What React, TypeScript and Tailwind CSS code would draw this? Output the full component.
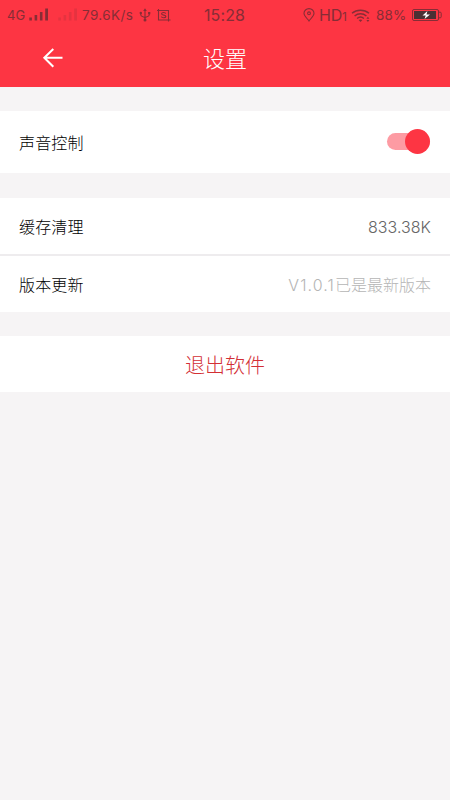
import React from 'react';

function SignalBars({ className }: { className: string }) {
  return (
    <svg className={className} width="20" height="13" viewBox="0 0 20 13" fill="currentColor">
      <rect x="0.3" y="9.5" width="2.6" height="3" />
      <rect x="5.6" y="7" width="2.6" height="5.5" />
      <rect x="10.9" y="4" width="2.6" height="8.5" />
      <rect x="16.2" y="0.5" width="2.8" height="12" />
    </svg>
  );
}

function UsbIcon() {
  return (
    <svg className="ml-[4px] shrink-0" width="12" height="14" viewBox="0 0 12 14" fill="none" stroke="currentColor" strokeWidth="1.1">
      <path d="M6 2v10M1.8 5v2c0 2.2 4.2 1.4 4.2 3.2M10.2 5v2c0 2.2-4.2 1.4-4.2 3.2" />
      <path d="M6 0.2 4.2 3h3.6z" fill="currentColor" stroke="none" />
      <circle cx="1.8" cy="5" r="1.2" fill="currentColor" stroke="none" />
      <rect x="9.1" y="4" width="2.2" height="2.2" fill="currentColor" stroke="none" />
      <circle cx="6" cy="12" r="1.5" fill="currentColor" stroke="none" />
    </svg>
  );
}

function ScreenIcon() {
  return (
    <svg className="ml-[6px] shrink-0" width="14" height="13" viewBox="0 0 14 13" fill="none" stroke="currentColor" strokeWidth="1.1">
      <path d="M0 1.5H11.5V12.5M1.5 0V11H13.5" />
      <path d="M8.8 4.6C8.3 3 4.4 3.1 4.6 4.9 4.8 6.6 8.9 5.6 8.9 7.4 8.8 9.2 4.8 9.2 4.3 7.7" />
    </svg>
  );
}

function PinIcon() {
  return (
    <svg className="shrink-0" width="12" height="14" viewBox="0 0 12 14" fill="none" stroke="currentColor" strokeWidth="1.1">
      <path d="M6 13C4.6 10.8 1 8.2 1 5.3a5 4.7 0 0 1 10 0C11 8.2 7.4 10.8 6 13z" />
      <circle cx="6" cy="5.3" r="1.4" />
    </svg>
  );
}

function WifiIcon() {
  return (
    <svg className="ml-[3px] shrink-0" width="20" height="13" viewBox="0 0 20 13" fill="none" stroke="currentColor" strokeWidth="1.5">
      <path d="M1 4.2c4.8-4.1 12.2-4.1 17 0M3.6 7c3.4-3 8.4-3 11.8 0M6.1 9.5c2-1.8 4.8-1.8 6.8 0" />
      <path d="M7.6 11c1.1-.8 2.7-.8 3.8 0L9.5 13z" fill="currentColor" stroke="none" />
      <path d="M15.4 9.7h3L16.9 7.8zM15.4 11h3l-1.5 1.9z" fill="currentColor" stroke="none" />
    </svg>
  );
}

function BatteryIcon() {
  return (
    <svg className="ml-[5px] shrink-0" width="30" height="12" viewBox="0 0 30 12">
      <rect x="0.5" y="0.5" width="26" height="11" rx="1.5" fill="none" stroke="currentColor" />
      <rect x="2" y="2" width="22" height="8" fill="#4b3034" />
      <path d="M27 3.2h1.2q1 0 1 1v3.6q0 1-1 1H27" fill="none" stroke="currentColor" />
      <path d="M15.4 2 10.5 6.5h3.2L12.6 10 18 5.4h-3.5z" fill="#fff" />
    </svg>
  );
}

function StatusBar() {
  return (
    <div className="grid h-[30px] grid-cols-[204px_42px_1fr] items-center font-normal text-[#872d36]">
      <div className="flex items-center pl-[7px]">
        <span className="w-[22px] whitespace-nowrap pt-[1px] text-[13px] leading-none">4G</span>
        <SignalBars className="mb-[1px] shrink-0" />
        <SignalBars className="mb-[1px] ml-[9px] shrink-0 opacity-20" />
        <span className="ml-[4px] w-[53px] whitespace-nowrap pt-[1px] text-[13.5px] leading-none tracking-[0.4px]">79.6K/s</span>
        <UsbIcon />
        <ScreenIcon />
      </div>
      <span className="whitespace-nowrap text-[16px] leading-none tracking-[0.1px]">15:28</span>
      <div className="flex items-center pl-[57px]">
        <PinIcon />
        <span className="ml-[4px] flex w-[29px] items-baseline whitespace-nowrap text-[16px] leading-none tracking-[-0.2px]">
          HD<span className="text-[12px]">1</span>
        </span>
        <WifiIcon />
        <span className="ml-[5px] w-[31px] whitespace-nowrap pt-[1px] text-[13.5px] leading-none tracking-[0.1px]">88%</span>
        <BatteryIcon />
      </div>
    </div>
  );
}

function Header() {
  return (
    <header className="h-[87px] bg-[#fd3543]">
      <StatusBar />
      <div className="grid h-[57px] grid-cols-[1fr_auto_1fr] items-center text-white">
        <svg className="mb-[2px] ml-[42px]" width="22" height="20" viewBox="0 0 22 20" fill="none" stroke="currentColor" strokeWidth="2">
          <path d="M20.5 9.8H2.5M11.3 1 2.3 9.8l9 9" />
        </svg>
        <h1 className="text-[22px] font-light leading-none">设置</h1>
      </div>
    </header>
  );
}

export default function App() {
  return (
    <div className="h-[800px] w-[450px] overflow-hidden bg-[#f6f4f5] font-['Inter','Noto_Sans_CJK_SC',sans-serif] text-[16px] font-light text-black">
      <Header />
      <main className="flex flex-col">
        <section className="mt-[24px] flex h-[62px] items-center justify-between bg-white pl-[19px] pr-[20px]">
          <span className="pt-[2px] tracking-[0.15px]">声音控制</span>
          <div className="mb-[1px] flex h-[17px] w-[43px] items-center justify-end rounded-full bg-[#fd9ba3]">
            <div className="size-[25px] shrink-0 rounded-full bg-[#fd3543]" />
          </div>
        </section>
        <section className="mt-[25px] bg-white">
          <div className="flex h-[58px] items-center justify-between border-b-2 border-[#eeecee] pl-[19px] pr-[19px]">
            <span className="pt-px tracking-[0.15px]">缓存清理</span>
            <span className="pt-px tracking-[0.05px] text-[#666]">833.38K</span>
          </div>
          <div className="flex h-[56px] items-center justify-between pl-[19px] pr-[19px]">
            <span className="pt-[2px] tracking-[0.15px]">版本更新</span>
            <span className="pt-[2px] text-[#b5b5b5]">
              <span className="tracking-[1.1px]">V1.0.1</span>已是最新版本
            </span>
          </div>
        </section>
        <button className="mt-[24px] flex h-[56px] items-center justify-center bg-white pt-[3px] text-[20px] font-light text-[#d32f35]">
          退出软件
        </button>
      </main>
    </div>
  );
}
